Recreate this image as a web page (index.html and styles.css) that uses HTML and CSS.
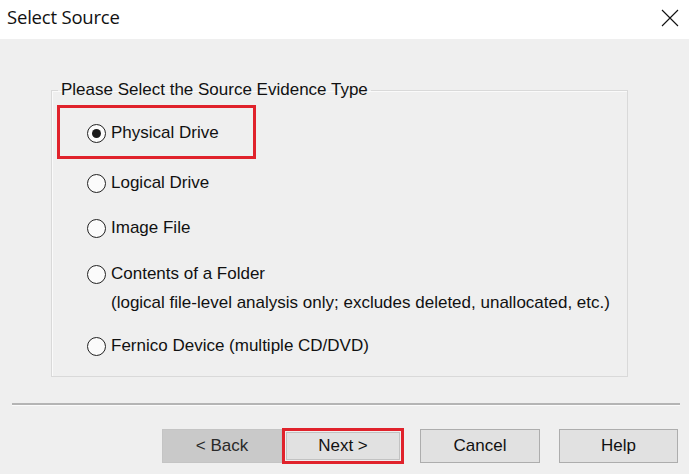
FILE: index.html
```html
<!DOCTYPE html>
<html>
<head>
<meta charset="utf-8">
<link rel="stylesheet" href="styles.css">
</head>
<body>
<div class="dialog">
  <div class="titlebar">
    <span class="title">Select Source</span>
    <svg class="close" width="18" height="18" viewBox="0 0 18 18"><path d="M1 1 L17 17 M17 1 L1 17" stroke="#111" stroke-width="1.1" fill="none"/></svg>
  </div>
  <div class="body">
    <fieldset class="group">
      <legend class="legend">Please Select the Source Evidence Type</legend>
      <div class="highlight">
        <label class="row"><span class="radio checked"></span><span>Physical Drive</span></label>
      </div>
      <label class="row r-logical"><span class="radio"></span><span>Logical Drive</span></label>
      <label class="row r-image"><span class="radio"></span><span>Image File</span></label>
      <label class="row r-folder"><span class="radio"></span><span>Contents of a Folder</span></label>
      <div class="note">(logical file-level analysis only; excludes deleted, unallocated, etc.)</div>
      <label class="row r-fernico"><span class="radio"></span><span>Fernico Device (multiple CD/DVD)</span></label>
    </fieldset>
    <div class="separator"></div>
    <div class="buttons">
      <button class="btn disabled">&lt; Back</button>
      <div class="next-wrap"><button class="btn next">Next &gt;</button></div>
      <button class="btn cancel">Cancel</button>
      <button class="btn help">Help</button>
    </div>
  </div>
</div>
</body>
</html>
```

FILE: styles.css
```css
* { box-sizing: border-box; }
html, body {
  margin: 0;
  padding: 0;
  width: 689px;
  height: 474px;
  overflow: hidden;
  background: #f0f0f0;
}
.dialog {
  width: 689px;
  height: 474px;
  display: flex;
  flex-direction: column;
  font-family: "Liberation Sans", Arial, sans-serif;
  font-size: 17px;
  color: #111;
}
.titlebar {
  height: 39px;
  background: #fff;
  display: flex;
  align-items: center;
  justify-content: space-between;
  padding: 0 10px 6px 7px;
}
.title {
  font-family: "Open Sans", "Noto Sans", sans-serif;
  font-size: 18.5px;
  color: #111;
  letter-spacing: -0.2px;
}
.close { display: block; margin-top: 2px; }
.body {
  flex: 1;
  display: flex;
  flex-direction: column;
  background: #efefef;
}
.group {
  margin: 41px 0 0 51px;
  width: 577px;
  height: 297px;
  padding: 0;
  border: 1px solid #d9d9d9;
  box-shadow: inset 1px 1px 0 #fafafa;
  display: flex;
  flex-direction: column;
  min-width: 0;
}
.legend {
  margin-left: 6px;
  padding: 0 3px;
  line-height: 20px;
  font-size: 17px;
}
.highlight {
  margin: 5px 0 0 5px;
  width: 199px;
  height: 54px;
  border: 3px solid #e0222b;
  display: flex;
  align-items: center;
  padding-left: 27px;
  padding-top: 2px;
}
.row {
  display: flex;
  align-items: center;
  gap: 5px;
  height: 24px;
  padding-left: 35px;
}
.highlight .row { padding-left: 0; }
.r-logical { margin-top: 12px; }
.r-image { margin-top: 21px; }
.r-folder { margin-top: 22px; }
.note {
  margin: 7px 0 0 59px;
  line-height: 20px;
}
.r-fernico { margin-top: 21px; }
.radio {
  width: 19px;
  height: 19px;
  border-radius: 50%;
  border: 1.3px solid #222;
  background: #fbfbfb;
  display: flex;
  align-items: center;
  justify-content: center;
  flex: none;
}
.radio.checked::after {
  content: "";
  width: 9px;
  height: 9px;
  border-radius: 50%;
  background: #1a1a1a;
}
.separator {
  margin: 26px 9px 0 12px;
  height: 3px;
  border-top: 2px solid #b4b4b4;
  border-bottom: 1px solid #fbfbfb;
}
.buttons {
  margin-top: 22px;
  display: flex;
  align-items: center;
  justify-content: flex-end;
  padding-right: 11px;
}
.btn {
  font-family: "Liberation Sans", Arial, sans-serif;
  font-size: 17px;
  color: #111;
  width: 120px;
  height: 34px;
  background: #e1e1e1;
  border: 1px solid #adadad;
  padding: 0;
}
.btn.disabled {
  background: #c9c9c9;
  border-color: #c4c4c4;
  color: #2a2a2a;
}
.next-wrap {
  width: 122px;
  height: 36px;
  border: 3px solid #e0222b;
  padding: 1px;
  display: flex;
}
.btn.next {
  width: 100%;
  height: 100%;
  border: 1px solid #c2c2c2;
}
.cancel { margin-left: 16px; }
.help { margin-left: 19px; width: 119px; }
```
